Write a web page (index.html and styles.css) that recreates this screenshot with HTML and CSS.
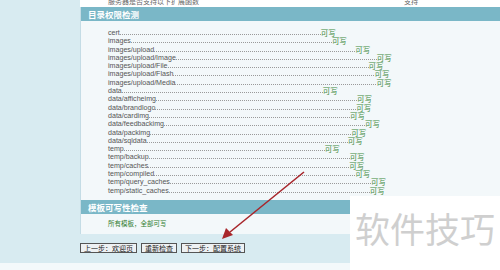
FILE: index.html
```html
<!DOCTYPE html>
<html lang="zh-CN">
<head>
    <meta charset="UTF-8">
    <title>ECShop 安装 - 检测环境</title>
    <link rel="stylesheet" href="styles.css">
</head>
<body>
    <div class="page">
        <div class="main">
            <div class="top-row">
                <span class="top-left">服务器是否支持以下扩展函数</span>
                <span class="top-right">支持</span>
            </div>
            <div class="panel">
                <h3 class="bar">目录权限检测</h3>
                <ul class="dir-list">
                    <li><span class="path">cert</span><span class="dots"></span><span class="ok">可写</span></li>
                    <li><span class="path">images</span><span class="dots"></span><span class="ok">可写</span></li>
                    <li><span class="path">images/upload</span><span class="dots"></span><span class="ok">可写</span></li>
                    <li><span class="path">images/upload/Image</span><span class="dots"></span><span class="ok">可写</span></li>
                    <li><span class="path">images/upload/File</span><span class="dots"></span><span class="ok">可写</span></li>
                    <li><span class="path">images/upload/Flash</span><span class="dots"></span><span class="ok">可写</span></li>
                    <li><span class="path">images/upload/Media</span><span class="dots"></span><span class="ok">可写</span></li>
                    <li><span class="path">data</span><span class="dots"></span><span class="ok">可写</span></li>
                    <li><span class="path">data/afficheimg</span><span class="dots"></span><span class="ok">可写</span></li>
                    <li><span class="path">data/brandlogo</span><span class="dots"></span><span class="ok">可写</span></li>
                    <li><span class="path">data/cardimg</span><span class="dots"></span><span class="ok">可写</span></li>
                    <li><span class="path">data/feedbackimg</span><span class="dots"></span><span class="ok">可写</span></li>
                    <li><span class="path">data/packimg</span><span class="dots"></span><span class="ok">可写</span></li>
                    <li><span class="path">data/sqldata</span><span class="dots"></span><span class="ok">可写</span></li>
                    <li><span class="path">temp</span><span class="dots"></span><span class="ok">可写</span></li>
                    <li><span class="path">temp/backup</span><span class="dots"></span><span class="ok">可写</span></li>
                    <li><span class="path">temp/caches</span><span class="dots"></span><span class="ok">可写</span></li>
                    <li><span class="path">temp/compiled</span><span class="dots"></span><span class="ok">可写</span></li>
                    <li><span class="path">temp/query_caches</span><span class="dots"></span><span class="ok">可写</span></li>
                    <li><span class="path">temp/static_caches</span><span class="dots"></span><span class="ok">可写</span></li>
                </ul>
                <h3 class="bar">模板可写性检查</h3>
                <p class="tpl-ok">所有模板，全部可写</p>
            </div>
            <div class="buttons">
                <button class="btn">上一步：欢迎页</button>
                <button class="btn">重新检查</button>
                <button class="btn">下一步：配置系统</button>
            </div>
        </div>
    </div>

    <svg class="arrow" width="500" height="270" viewBox="0 0 500 270">
        <line x1="304" y1="172" x2="230" y2="232" stroke="#a8262b" stroke-width="1.6"/>
        <polygon points="222,239 226,228 233,235" fill="#a8262b"/>
    </svg>

    <div class="watermark">软件技巧</div>
</body>
</html>
```

FILE: styles.css
```css
body {
    margin: 0;
    width: 500px;
    height: 270px;
    overflow: hidden;
    background: #f4f9fb;
    font-family: "Liberation Sans", Arial, "Noto Sans CJK SC", sans-serif;
}
.page {
    height: 263px;
    background: #d8ebf1;
    padding-left: 80px;
}
.main {
    width: 420px;
}
.top-row {
    height: 7px;
    background: #fff;
    overflow: hidden;
    display: flex;
    align-items: flex-start;
    font-size: 7px;
    line-height: 8px;
    color: #666;
    font-family: "Noto Sans CJK SC", sans-serif;
}
.top-left {
    margin-left: 28px;
    margin-top: -3px;
}
.top-right {
    margin-left: 205px;
    margin-top: -3px;
}
.panel {
    background: #f3f8fa;
    border-left: 1px solid #c4dce5;
    padding-bottom: 6px;
}
.bar {
    margin: 0;
    height: 14px;
    line-height: 14px;
    padding-left: 7px;
    background: #7ab7c7;
    color: #fff;
    font-family: "Noto Sans CJK SC", serif;
    font-size: 8.5px;
    font-weight: bold;
}
.dir-list {
    list-style: none;
    margin: 7px 0 6px;
    padding: 0 0 0 27px;
    font-size: 7.1px;
    line-height: 8.3px;
    color: #555;
}
.dir-list li {
    height: 8.3px;
    white-space: nowrap;
}
.dots {
    display: inline-block;
    width: 201px;
    height: 6px;
    border-bottom: 1px dotted #9a9a9a;
}
.ok {
    color: #3f8a3f;
    font-family: "Noto Sans CJK SC", sans-serif;
    font-size: 7.5px;
    line-height: 1px;
    position: relative;
    top: 1px;
}
.tpl-ok {
    margin: 4px 0 0;
    padding-left: 27px;
    height: 10px;
    line-height: 10px;
    font-family: "Noto Sans CJK SC", sans-serif;
    font-size: 6.5px;
    color: #2f7d2f;
}
.buttons {
    display: flex;
    gap: 3px;
    padding-top: 9px;
}
.btn {
    height: 10px;
    padding: 0 3px;
    margin: 0;
    border: 1px solid #555;
    background: #eef1f3;
    font-family: "Noto Sans CJK SC", sans-serif;
    font-size: 7px;
    line-height: 8px;
    color: #222;
}
.btn + .btn {
    margin-left: 1px;
}
.arrow {
    position: absolute;
    left: 0;
    top: 0;
    pointer-events: none;
}
.watermark {
    position: absolute;
    left: 350px;
    top: 196px;
    width: 150px;
    height: 74px;
    background: #fff;
    color: #cfcfcf;
    font-family: "Noto Sans CJK SC", sans-serif;
    font-size: 35px;
    line-height: 64px;
    text-align: center;
}
```
